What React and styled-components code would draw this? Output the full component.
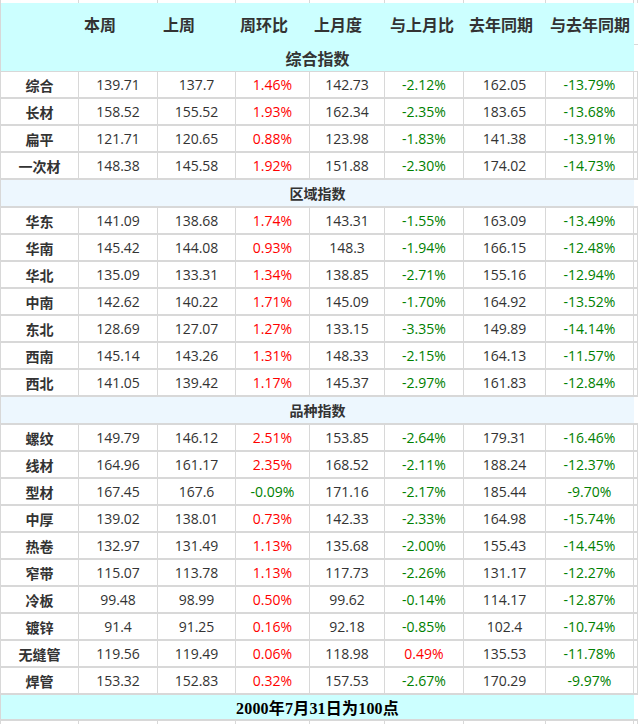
import React from 'react';
import styled, { createGlobalStyle } from 'styled-components';

const LINE = '#d8d8d8';
const CYAN = '#ccffff';
const BAND = '#edf7fe';
const COLS = '78px 79px 78px 74px 75px 79px 82px 88px 1fr';
const FONT = '"Noto Sans CJK SC", "Microsoft YaHei", sans-serif';
const NUM_FONT = '"Open Sans", "Noto Sans CJK SC", sans-serif';

const Global = createGlobalStyle`
  html, body { margin: 0; padding: 0; background: #fff; }
  body { width: 638px; height: 724px; overflow: hidden; font-family: ${FONT}; }
  * { box-sizing: border-box; }
`;

const Table = styled.div`
  display: flex;
  flex-direction: column;
  width: 638px;
`;

const Row = styled.div`
  display: grid;
  grid-template-columns: ${COLS};
  height: ${(p) => p.$h}px;
  border-left: 1px solid ${LINE};
`;

const Cell = styled.div`
  display: flex;
  align-items: center;
  justify-content: center;
  border-right: 1px solid ${LINE};
  border-bottom: 2px solid ${LINE};
  font-family: ${(p) => (p.$label ? FONT : NUM_FONT)};
  font-size: 14px;
  color: ${(p) => p.$color || '#333'};
  font-weight: ${(p) => (p.$label ? 700 : 400)};
  white-space: nowrap;
  padding-top: ${(p) => (p.$label ? 1 : 0)}px;
`;

const HeadCell = styled.div`
  display: flex;
  align-items: center;
  justify-content: flex-start;
  padding-left: ${(p) => p.$pl}px;
  background: ${CYAN};
  font-size: 16px;
  font-weight: 700;
  color: #333;
  white-space: nowrap;
`;

const Band = styled.div`
  grid-column: 1 / 9;
  display: flex;
  align-items: center;
  justify-content: center;
  background: ${(p) => p.$bg};
  border-bottom: ${(p) => p.$bb}px solid ${LINE};
  font-size: ${(p) => p.$fs}px;
  font-weight: 700;
  color: ${(p) => p.$color || '#333'};
  white-space: nowrap;
`;

const Edge = styled.div`
  border-bottom: ${(p) => p.$bb}px solid ${LINE};
`;

const Strip = styled.div`
  border-right: 1px solid ${LINE};
`;

const FootText = styled.span`
  font-family: "Liberation Serif", "Noto Sans CJK SC", serif;
  font-size: 16px;
  font-weight: 700;
  color: #000;
  letter-spacing: 0.2px;
`;

const heads = [
  { t: '', pl: 0 },
  { t: '本周', pl: 5 },
  { t: '上周', pl: 5 },
  { t: '周环比', pl: 4 },
  { t: '上月度', pl: 4 },
  { t: '与上月比', pl: 5 },
  { t: '去年同期', pl: 5 },
  { t: '与去年同期', pl: 4 },
];

const groups = [
  {
    title: null,
    rows: [
      ['综合', '139.71', '137.7', '1.46%', '142.73', '-2.12%', '162.05', '-13.79%'],
      ['长材', '158.52', '155.52', '1.93%', '162.34', '-2.35%', '183.65', '-13.68%'],
      ['扁平', '121.71', '120.65', '0.88%', '123.98', '-1.83%', '141.38', '-13.91%'],
      ['一次材', '148.38', '145.58', '1.92%', '151.88', '-2.30%', '174.02', '-14.73%'],
    ],
  },
  {
    title: '区域指数',
    rows: [
      ['华东', '141.09', '138.68', '1.74%', '143.31', '-1.55%', '163.09', '-13.49%'],
      ['华南', '145.42', '144.08', '0.93%', '148.3', '-1.94%', '166.15', '-12.48%'],
      ['华北', '135.09', '133.31', '1.34%', '138.85', '-2.71%', '155.16', '-12.94%'],
      ['中南', '142.62', '140.22', '1.71%', '145.09', '-1.70%', '164.92', '-13.52%'],
      ['东北', '128.69', '127.07', '1.27%', '133.15', '-3.35%', '149.89', '-14.14%'],
      ['西南', '145.14', '143.26', '1.31%', '148.33', '-2.15%', '164.13', '-11.57%'],
      ['西北', '141.05', '139.42', '1.17%', '145.37', '-2.97%', '161.83', '-12.84%'],
    ],
  },
  {
    title: '品种指数',
    rows: [
      ['螺纹', '149.79', '146.12', '2.51%', '153.85', '-2.64%', '179.31', '-16.46%'],
      ['线材', '164.96', '161.17', '2.35%', '168.52', '-2.11%', '188.24', '-12.37%'],
      ['型材', '167.45', '167.6', '-0.09%', '171.16', '-2.17%', '185.44', '-9.70%'],
      ['中厚', '139.02', '138.01', '0.73%', '142.33', '-2.33%', '164.98', '-15.74%'],
      ['热卷', '132.97', '131.49', '1.13%', '135.68', '-2.00%', '155.43', '-14.45%'],
      ['窄带', '115.07', '113.78', '1.13%', '117.73', '-2.26%', '131.17', '-12.27%'],
      ['冷板', '99.48', '98.99', '0.50%', '99.62', '-0.14%', '114.17', '-12.87%'],
      ['镀锌', '91.4', '91.25', '0.16%', '92.18', '-0.85%', '102.4', '-10.74%'],
      ['无缝管', '119.56', '119.49', '0.06%', '118.98', '0.49%', '135.53', '-11.78%'],
      ['焊管', '153.32', '152.83', '0.32%', '157.53', '-2.67%', '170.29', '-9.97%'],
    ],
  },
];

const tone = (v) => {
  if (!v.endsWith('%')) return undefined;
  return v.startsWith('-') ? '#008000' : '#ff0000';
};

function DataRow({ r }) {
  return (
    <Row $h={27}>
      {r.map((v, i) => (
        <Cell key={i} $label={i === 0} $color={tone(v)}>
          {v}
        </Cell>
      ))}
      <Cell />
    </Row>
  );
}

function VerticalStrip({ h }) {
  return (
    <Row $h={h}>
      {Array.from({ length: 9 }).map((_, i) => (
        <Strip key={i} />
      ))}
    </Row>
  );
}

export default function App() {
  return (
    <>
      <Global />
      <Table>
        <VerticalStrip h={3} />
        <Row $h={42}>
          {heads.map((h, i) => (
            <HeadCell key={i} $pl={h.pl}>
              {h.t}
            </HeadCell>
          ))}
          <Edge $bb={1} />
        </Row>
        <Row $h={27}>
          <Band $bg={CYAN} $bb={1} $fs={16}>
            综合指数
          </Band>
          <Edge $bb={1} />
        </Row>
        {groups.map((g, gi) => (
          <React.Fragment key={gi}>
            {g.title && (
              <Row $h={28}>
                <Band $bg={BAND} $bb={2} $fs={14}>
                  {g.title}
                </Band>
                <Edge $bb={2} />
              </Row>
            )}
            {g.rows.map((r, ri) => (
              <DataRow key={ri} r={r} />
            ))}
          </React.Fragment>
        ))}
        <Row $h={26}>
          <Band $bg={CYAN} $bb={2} $fs={16} $color="#000">
            <FootText>2000年7月31日为100点</FootText>
          </Band>
          <Edge $bb={2} />
        </Row>
        <VerticalStrip h={10} />
      </Table>
    </>
  );
}
